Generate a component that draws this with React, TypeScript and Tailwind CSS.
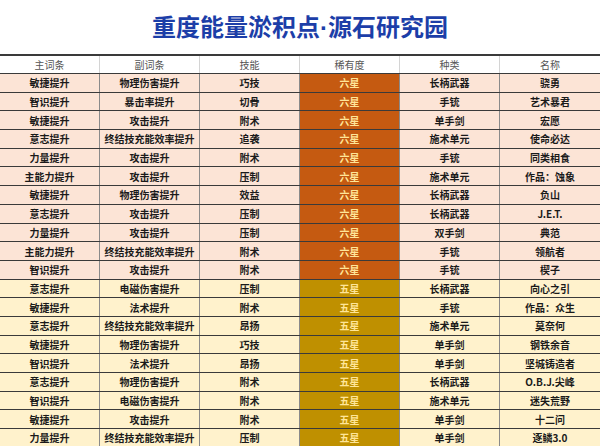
const rows: string[][] = [
  ['敏捷提升', '物理伤害提升', '巧技', '六星', '长柄武器', '骁勇'],
  ['智识提升', '暴击率提升', '切骨', '六星', '手铳', '艺术暴君'],
  ['敏捷提升', '攻击提升', '附术', '六星', '单手剑', '宏愿'],
  ['意志提升', '终结技充能效率提升', '追袭', '六星', '施术单元', '使命必达'],
  ['力量提升', '攻击提升', '附术', '六星', '手铳', '同类相食'],
  ['主能力提升', '攻击提升', '压制', '六星', '施术单元', '作品：蚀象'],
  ['敏捷提升', '物理伤害提升', '效益', '六星', '长柄武器', '负山'],
  ['意志提升', '攻击提升', '压制', '六星', '长柄武器', 'J.E.T.'],
  ['力量提升', '攻击提升', '压制', '六星', '双手剑', '典范'],
  ['主能力提升', '终结技充能效率提升', '附术', '六星', '手铳', '领航者'],
  ['智识提升', '攻击提升', '附术', '六星', '手铳', '楔子'],
  ['意志提升', '电磁伤害提升', '压制', '五星', '长柄武器', '向心之引'],
  ['敏捷提升', '法术提升', '附术', '五星', '手铳', '作品：众生'],
  ['意志提升', '终结技充能效率提升', '昂扬', '五星', '施术单元', '莫奈何'],
  ['敏捷提升', '物理伤害提升', '巧技', '五星', '单手剑', '钢铁余音'],
  ['智识提升', '法术提升', '昂扬', '五星', '单手剑', '坚城铸造者'],
  ['意志提升', '物理伤害提升', '附术', '五星', '长柄武器', 'O.B.J.尖峰'],
  ['智识提升', '电磁伤害提升', '附术', '五星', '施术单元', '迷失荒野'],
  ['敏捷提升', '攻击提升', '附术', '五星', '单手剑', '十二问'],
  ['力量提升', '终结技充能效率提升', '压制', '五星', '单手剑', '逐鳞3.0'],
]

const headers = ['主词条', '副词条', '技能', '稀有度', '种类', '名称']

export default function App() {
  return (
    <div className="w-[600px] h-[446px] overflow-hidden bg-white font-['Noto_Sans_CJK_SC',sans-serif]">
      <div className="h-[54px] flex items-center justify-center">
        <h1 className="text-[24px] font-bold text-[#1c3ea8] leading-none">
          重度能量淤积点<span className="font-['Liberation_Sans',sans-serif]">·</span>源石研究园
        </h1>
      </div>
      <div className="border-t-2 border-[#3a3a3a]">
        <div className="grid grid-cols-6 h-[18px] border-b border-[#3a3a3a]">
          {headers.map((h, i) => (
            <div
              key={h}
              className={`flex items-center justify-center text-[10px] text-[#555] ${i < 5 ? 'border-r border-[#d4d4d4]' : ''}`}
            >
              {h}
            </div>
          ))}
        </div>
        {rows.map((r, ri) => {
          const six = r[3] === '六星'
          return (
            <div
              key={ri}
              className={`grid grid-cols-6 h-[18.7px] border-b border-[#3a3a3a] ${six ? 'bg-[#fce4d6]' : 'bg-[#fff2cc]'}`}
            >
              {r.map((c, ci) => (
                <div
                  key={ci}
                  className={`flex items-center justify-center text-[10px] font-bold ${ci < 5 ? 'border-r border-[#8a8a8a]' : ''} ${
                    ci === 3
                      ? six
                        ? 'bg-[#c55a11] text-[#ffe699]'
                        : 'bg-[#bf9000] text-[#ffe699]'
                      : 'text-[#1a1a1a]'
                  }`}
                >
                  {c}
                </div>
              ))}
            </div>
          )
        })}
      </div>
    </div>
  )
}
